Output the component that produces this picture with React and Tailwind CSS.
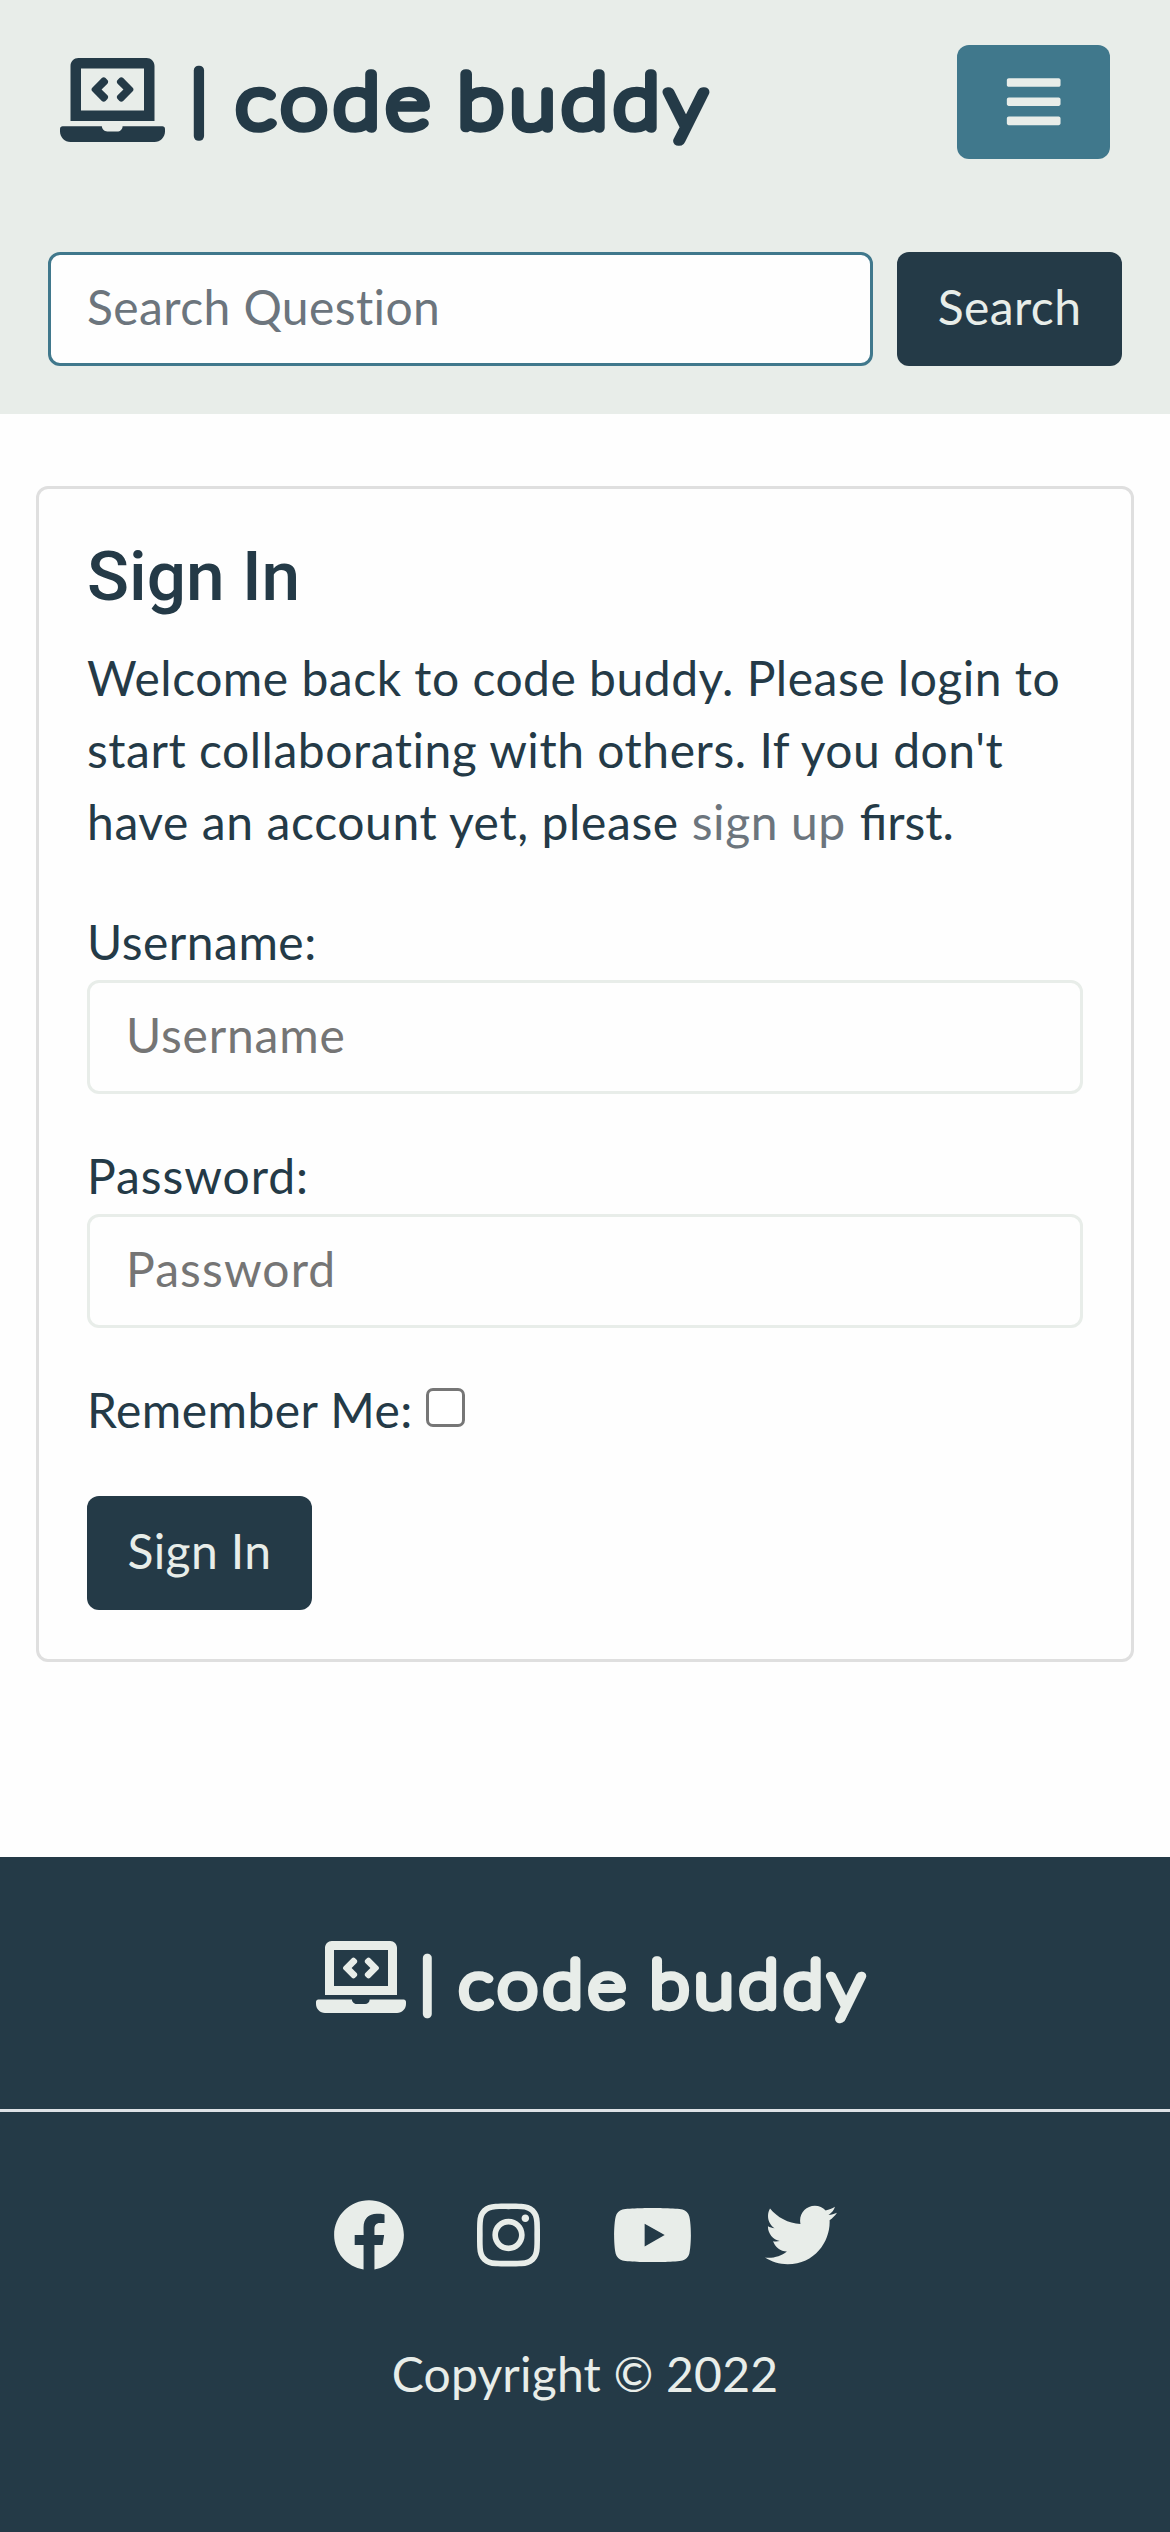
import { FaBars, FaFacebook, FaInstagram, FaLaptopCode, FaTwitter, FaYoutube } from "react-icons/fa";

function Wordmark({ className }) {
  return (
    <svg viewBox="0 0 520 100" className={className} fill="currentColor" stroke="currentColor" strokeWidth="9.6" strokeLinejoin="round" fontFamily="Lato, sans-serif" fontWeight="100">
      <text x="4" y="73" fontSize="69.5">|</text>
      <text x="49" y="78" fontSize="75" letterSpacing="6" textLength="200" lengthAdjust="spacingAndGlyphs">code</text>
      <text x="271" y="78" fontSize="75" letterSpacing="6" textLength="255" lengthAdjust="spacingAndGlyphs">buddy</text>
    </svg>
  );
}

function Field({ label, type, labelClass, inputClass }) {
  return (
    <div className="mb-12">
      <label className="block h-[72px] leading-[68px]"><span className={labelClass}>{label}:</span></label>
      <input type={type} placeholder={label} className={"block h-[114px] w-full rounded-xl border-3 border-[#e8ede9] bg-transparent px-9 pb-[5px] placeholder:text-[#757575] " + inputClass} />
    </div>
  );
}

export default function App() {
  return (
    <div className="flex h-[2532px] w-[1170px] flex-col bg-[#fefefe] font-['Lato',sans-serif] text-[48px] leading-[72px] text-[#243a47]">
      <header className="h-[414px] bg-[#e8ede9] px-12 pt-[45px]">
        <div className="flex h-[114px] items-start justify-between pr-3 pl-3">
          <div className="flex items-start">
            <FaLaptopCode className="mt-[13px] h-[84px] w-[105px]" />
            <Wordmark className="ml-[22px] mt-[5px] h-[100px] w-[520px] overflow-visible" />
          </div>
          <button className="flex h-[114px] w-[153px] items-center justify-center rounded-xl bg-[#40788c] text-[#e8ede9]">
            <FaBars className="size-[61.4px]" />
          </button>
        </div>
        <div className="mt-[93px] flex gap-6">
          <input placeholder="Search Question" className="h-[114px] min-w-0 flex-1 rounded-xl border-3 border-[#40788c] bg-[#fefefe] px-9 pb-[5px] tracking-[0.4px] placeholder:text-[#6c757d]" />
          <button className="h-[114px] w-[225px] rounded-xl bg-[#243a47] pb-[5px] tracking-[0.4px] text-[#e8ede9]">Search</button>
        </div>
      </header>

      <main className="px-9 pt-[72px]">
        <section className="h-[1176px] rounded-xl border-3 border-[#dfdfdf] px-12 pt-[46px]">
          <h3 className="mb-6 font-['Roboto',sans-serif] text-[69.4px] leading-[83px] font-medium">Sign In</h3>
          <p className="mb-[50px] whitespace-nowrap">
            <span className="block tracking-[0.5px]">Welcome back to code buddy. Please login to</span>
            <span className="block tracking-[0.53px]">start collaborating with others. If you don't</span>
            <span className="block tracking-[0.6px]">have an account yet, please <a className="text-[#6c757d]">sign up</a> <span className="pl-px tracking-normal">first.</span></span>
          </p>
          <Field label="Username" type="text" labelClass="tracking-[0.5px]" inputClass="tracking-[0.8px]" />
          <Field label="Password" type="password" labelClass="tracking-[0.95px]" inputClass="tracking-[1.1px]" />
          <div className="mb-12 flex h-[72px] items-start">
            <label className="leading-[68px] tracking-[0.45px]">Remember Me:</label>
            <input type="checkbox" className="mt-3 ml-[13px] size-[39px] appearance-none rounded-[7px] border-3 border-[#767676] bg-white" />
          </div>
          <button className="h-[114px] w-[225px] rounded-xl bg-[#243a47] pb-[4px] tracking-[0.4px] text-[#e8ede9]">Sign In</button>
        </section>
      </main>

      <footer className="mt-[195px] flex flex-1 flex-col bg-[#243a47] text-[#e8ede9]">
        <div className="flex h-[255px] items-start justify-center border-b-3 border-[#dee2e6] pt-[84px] pl-[9px]">
          <FaLaptopCode className="h-[72px] w-[90px]" />
          <Wordmark className="ml-[11px] -mt-px h-[86px] w-[447px] overflow-visible" />
        </div>
        <div className="mt-[87px] flex justify-center gap-[72px] text-[72px]">
          <FaFacebook className="h-[72px] w-[72px]" />
          <FaInstagram className="h-[72px] w-[63px]" />
          <FaYoutube className="h-[72px] w-[81px]" />
          <FaTwitter className="h-[72px] w-[72px]" />
        </div>
        <p className="mt-[67px] text-center tracking-[0.2px]">Copyright © 2022</p>
      </footer>
    </div>
  );
}
